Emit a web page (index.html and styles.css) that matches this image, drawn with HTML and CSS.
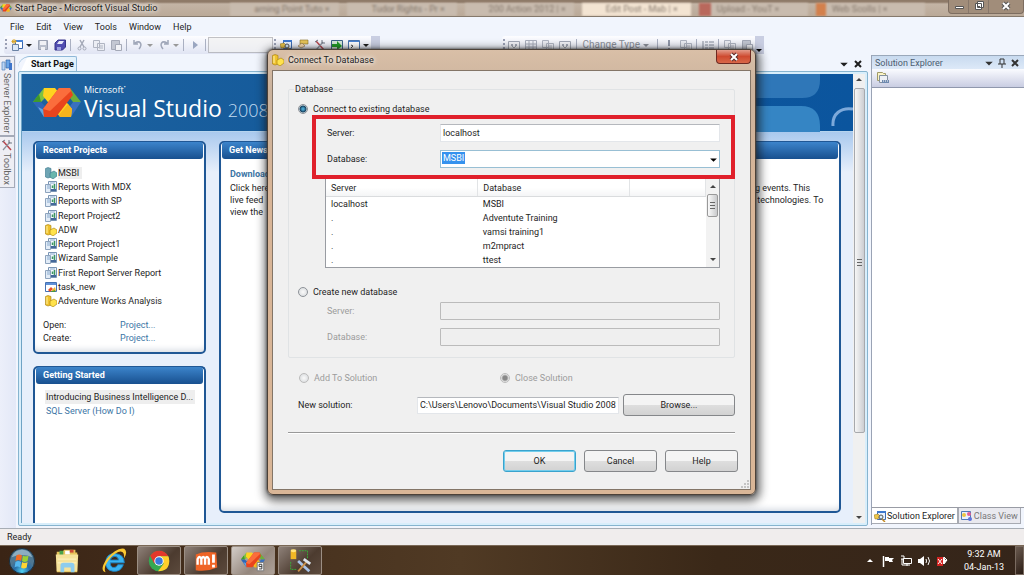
FILE: index.html
```html
<!DOCTYPE html>
<html lang="en">
<head>
<meta charset="utf-8">
<title>Start Page - Microsoft Visual Studio</title>
<link rel="stylesheet" href="styles.css">
</head>
<body>
<svg class="defs" aria-hidden="true">
  <symbol id="vs" viewBox="0 0 48 32">
    <path d="M11 1 0 15h8l8-8z" fill="#7fc241"/><path d="M0 15h8l-2-8z" fill="#3f9a2c"/>
    <path d="M0 15l11 15 4-8-7-7z" fill="#2f66b8"/><path d="M5 20l6 10 2-6z" fill="#63a7dd"/>
    <path d="M37 1l11 14h-8l-6-8z" fill="#6cae3c"/><path d="M48 15 38 30l-3-8 5-7z" fill="#3a70c0"/>
    <path d="M11 1h11l17 21-1 8H27L10 9z" fill="#ffd11f"/><path d="M27 30h11l1-8-4-5-9 11z" fill="#f6b41c"/>
    <path d="M26 1h11l3 7-17 22H11l-1-8z" fill="#e9441d"/><path d="M26 1h11l1 3-21 20-7-2z" fill="#fb6d3c"/>
  </symbol>
  <symbol id="cube" viewBox="0 0 12 12">
    <path d="M.5 1.500 3 .5l3 1V10l-3 1-2.500-1z" fill="#f0c22e" stroke="#a57c09" stroke-width=".6"/>
    <path d="M5 6l4-2 3 2v3l-4 3-3-2z" fill="#ffe24b" stroke="#a57c09" stroke-width=".6"/><path d="M2 2v7" stroke="#fff2a2"/>
  </symbol>
  <symbol id="cubeblue" viewBox="0 0 12 12">
    <path d="M.5 1.500 3 .5l3 1V10l-3 1-2.500-1z" fill="#6fa5b4" stroke="#38758b" stroke-width=".6"/>
    <path d="M5 6l4-2 3 2v3l-4 3-3-2z" fill="#69b6ad" stroke="#38758b" stroke-width=".6"/>
  </symbol>
  <symbol id="report" viewBox="0 0 12 12">
    <path d="M3.500.5h8v10h-8z" fill="#f2f7fd" stroke="#7a95b4"/><path d="M.5 3.500h5v8h-5z" fill="#e2ecf7" stroke="#8da3bd"/>
    <path d="M5 2h5M2 5h3M2 7h3" stroke="#89aacd"/><path d="M7.500 7V4.500M9.500 8V3" stroke="#3c9560" stroke-width="1.500"/><path d="M6 9h5" stroke="#44689a" stroke-width="2"/>
  </symbol>
  <symbol id="task" viewBox="0 0 12 12">
    <path d="M.5 1.500h11v9H.5z" fill="#fff" stroke="#4571b2"/><path d="M1 2h10v2H1z" fill="#5f91d8"/>
    <path d="M3 9l3-3 2 2-3 3z" fill="#e6502b"/><path d="M7 9l3-3 1 4H7z" fill="#f0b727"/><path d="M5 11h5V9z" fill="#49983c"/>
  </symbol>
  <symbol id="newproj" viewBox="0 0 12 12">
    <path d="M4.500 1.500h7v8h-7z" fill="#fff" stroke="#3866ad"/><path d="M4 1h8v2H4z" fill="#4783d6"/>
    <path d="M1.500 5.500h6v6h-6z" fill="#dce8f8" stroke="#6b83a5"/><path d="M3 0v5M.5 2.500h5M1 1l4 3M5 1 1 4" stroke="#d7a62d"/>
  </symbol>
  <symbol id="save" viewBox="0 0 12 12"><path d="M1.500 1.500h9v9h-9z" fill="#b9bfcc" stroke="#9ba2b3"/><path d="M3 2h6v4H3zM4 8h4v3H4z" fill="#f0f1f5"/></symbol>
  <symbol id="saveall" viewBox="0 0 12 12"><path d="M4 1h7.500v7l-3 3H1V4z" fill="#514db1" stroke="#37358b"/><path d="M5 2h5L8 5H3z" fill="#e4e7fa"/><path d="M3 8h4v3H3z" fill="#9ba1e1"/></symbol>
  <symbol id="cut" viewBox="0 0 12 12"><path d="M4 1l4 7M8 1 4 8" stroke="#a4a9b7" stroke-width="1.500"/><g fill="none" stroke="#a4a9b7"><circle cx="3.500" cy="9.500" r="1.500"/><circle cx="8.500" cy="9.500" r="1.500"/></g></symbol>
  <symbol id="copy" viewBox="0 0 12 12"><g fill="#eceef4" stroke="#b0b5c2"><path d="M.5 1.500h6v7h-6zM4.500 4.500h7v7h-7z"/></g><path d="M6 7h4M6 9h4" stroke="#b0b5c2"/></symbol>
  <symbol id="paste" viewBox="0 0 12 12"><path d="M1.500 1.500h8v9h-8z" fill="#c3c7d2" stroke="#a4a9b7"/><path d="M5.500 5.500h6v6h-6z" fill="#f1f2f6" stroke="#a4a9b7"/></symbol>
  <symbol id="undo" viewBox="0 0 12 12"><path d="M3 4c5-3 8 1 4 6M2 1v4h4" fill="none" stroke="#9fa6b8" stroke-width="1.500"/></symbol>
  <symbol id="redo" viewBox="0 0 12 12"><path d="M9 4c-5-3-8 1-4 6M10 1v4H6" fill="none" stroke="#9fa6b8" stroke-width="1.500"/></symbol>
  <symbol id="play" viewBox="0 0 12 12"><path d="M4 2l5 4-5 4z" fill="#9aa6c0"/></symbol>
  <symbol id="explorer" viewBox="0 0 12 12"><path d="M3.500 1.500h8v8h-8z" fill="#e9f2ff" stroke="#3d6cb3"/><path d="M3 1h9v2H3z" fill="#3d78ce"/><path d="M0 5l4-1 2 2-2 3H1z" fill="#edc649" stroke="#917116" stroke-width=".5"/><circle cx="7" cy="7" r="2" fill="#d7eeff" stroke="#555"/><path d="M8 9l3 3" stroke="#c48a24" stroke-width="1.500"/></symbol>
  <symbol id="props" viewBox="0 0 12 12"><path d="M3 1h8v4H3z" fill="#e8c65a" stroke="#876e25" stroke-width=".6"/><path d="M1 7l4-3 3 3-4 2z" fill="#fbdcaf" stroke="#8a7045" stroke-width=".6"/></symbol>
  <symbol id="tools" viewBox="0 0 12 12"><path d="M2 2l8 9" stroke="#b8444c" stroke-width="1.500"/><path d="M9 3 2 11" stroke="#8a929d" stroke-width="1.200"/><path d="M8 1v3h3M1 3l3-2" stroke="#707985" fill="none"/></symbol>
  <symbol id="green" viewBox="0 0 12 12"><path d="M.5 1.500h11v9H.5z" fill="#d5eadb" stroke="#3b6289"/><path d="M1 5h5V2l5 5-5 4V8H1z" fill="#1e9a25"/></symbol>
  <symbol id="window" viewBox="0 0 12 12"><path d="M.5 1.500h11v10H.5z" fill="#fff" stroke="#4975b0"/><path d="M1 2h10v1H1z" fill="#4b85d4"/><path d="M3 6l2 1-2 2" fill="none" stroke="#444"/></symbol>
  <symbol id="pane" viewBox="0 0 12 12"><path d="M.5 2.500h11v9H.5z" fill="#f2f3f8" stroke="#a3a8b6"/><path d="M3 5h2v2H3zM7 5h2v2H7z" fill="#a3a8b6"/><path d="M4 7l2 2 2-2" fill="none" stroke="#a3a8b6"/></symbol>
  <symbol id="grid" viewBox="0 0 12 12"><path d="M.5 1.500h11v9H.5zM.5 5h11M.5 8h11M4 1v10M8 1v10" fill="none" stroke="#a9aebc"/></symbol>
  <symbol id="lines" viewBox="0 0 12 12"><path d="M1 2v8M3 3h3M3 6h3M3 9h3M7 3h5M7 6h5M7 9h5" stroke="#858d9d"/></symbol>
  <symbol id="bang" viewBox="0 0 12 12"><path d="M6 1v6M6 9v2" stroke="#9198aa" stroke-width="2"/></symbol>
  <symbol id="servers" viewBox="0 0 12 12"><path d="M1 3h3v8H1z" fill="#bad5f5" stroke="#5484bc" stroke-width=".7"/><path d="M5 1h4v8H5z" fill="#6aa5e7" stroke="#3465a4" stroke-width=".7"/><path d="M8 4h3v7H8z" fill="#3e75ca"/></symbol>
  <symbol id="classview" viewBox="0 0 12 12"><path d="M.5 1.500h9v8h-9z" fill="#e9f0ff" stroke="#4f79b5"/><circle cx="3" cy="5" r="2" fill="#edc541"/><circle cx="8" cy="4" r="2" fill="#e15e94"/><circle cx="9" cy="9" r="2" fill="#5c72db"/></symbol>
  <symbol id="files" viewBox="0 0 14 14"><path d="M1.500 1.500h5l1 1h2v7h-8z" fill="#fbf4c6" stroke="#a09b68"/><path d="M3.500 4.500h8v7h-8z" fill="#edf0f5" stroke="#83919f"/><path d="M6 9h7v3H6z" fill="#6e89ae"/><path d="M7 10h1M9 10h1M11 10h1" stroke="#fff"/></symbol>
  <symbol id="x" viewBox="0 0 10 10"><path d="M2 2l6 6M8 2 2 8" stroke="currentColor" stroke-width="2"/></symbol>
  <symbol id="down" viewBox="0 0 8 8"><path d="M1 3h6L4 6z" fill="currentColor"/></symbol>
  <symbol id="up" viewBox="0 0 8 8"><path d="M1 5h6L4 2z" fill="currentColor"/></symbol>
</svg>

<div class="app">
  <header class="titlebar">
    <svg class="i12"><use href="#vs"/></svg>
    <span class="title">Start Page - Microsoft Visual Studio</span>
    <div class="glass" aria-hidden="true">
      <i>arning Point Tuto ×</i><i>Tudor Rights - Pr ×</i><i>200 Action 2012 | ×</i><i class="on">Edit Post - Mab | ×</i><i class="red">Upload - YouT ×</i><i class="orange">Web Scolls | ×</i>
    </div>
    <div class="winbtns">
      <button aria-label="Minimize"><svg class="i12" viewBox="0 0 12 12"><path d="M2.500 6.500h8v2h-8z" fill="#fff" stroke="#555"/></svg></button>
      <button aria-label="Restore"><svg class="i12" viewBox="0 0 12 12"><path d="M4.500 1.500h6v6h-6zM2.500 3.500h6v6h-6z" fill="#fff" stroke="#555"/><path d="M5 6h2v1H5z" fill="#555"/></svg></button>
      <button aria-label="Close"><svg class="i12" viewBox="0 0 12 12"><path d="M3 3l6 6M9 3 3 9" stroke="#555" stroke-width="4"/><path d="M3 3l6 6M9 3 3 9" stroke="#fff" stroke-width="2"/></svg></button>
    </div>
  </header>

  <nav class="menu"><button>File</button><button>Edit</button><button>View</button><button>Tools</button><button>Window</button><button>Help</button></nav>

  <div class="toolbars">
    <div class="toolbar">
      <b class="grip"></b>
      <button aria-label="New project"><svg><use href="#newproj"/></svg></button><svg class="arr"><use href="#down"/></svg>
      <button aria-label="Save"><svg><use href="#save"/></svg></button>
      <button aria-label="Save all"><svg><use href="#saveall"/></svg></button><b class="sep"></b>
      <button aria-label="Cut"><svg><use href="#cut"/></svg></button>
      <button aria-label="Copy"><svg><use href="#copy"/></svg></button>
      <button aria-label="Paste"><svg><use href="#paste"/></svg></button><b class="sep"></b>
      <button aria-label="Undo"><svg><use href="#undo"/></svg></button><svg class="arr dim"><use href="#down"/></svg>
      <button aria-label="Redo"><svg><use href="#redo"/></svg></button><svg class="arr dim"><use href="#down"/></svg><b class="sep"></b>
      <button aria-label="Start"><svg><use href="#play"/></svg></button><b class="sep"></b>
      <select class="config" aria-label="Solution configuration" disabled></select>
      <b class="grip"></b>
      <button aria-label="Solution Explorer"><svg><use href="#explorer"/></svg></button>
      <button aria-label="Properties"><svg><use href="#props"/></svg></button>
      <button aria-label="Toolbox"><svg><use href="#tools"/></svg></button>
      <button aria-label="Start Page"><svg><use href="#green"/></svg></button>
      <button aria-label="Command Window"><svg><use href="#window"/></svg></button><svg class="arr"><use href="#down"/></svg>
      <b class="end"><svg><use href="#down"/></svg></b>
    </div>
    <div class="toolbar faded">
      <b class="grip"></b>
      <button aria-label="Diagram pane"><svg><use href="#pane"/></svg></button>
      <button aria-label="Criteria pane"><svg><use href="#grid"/></svg></button>
      <button aria-label="SQL pane"><svg><use href="#copy"/></svg></button>
      <button aria-label="Results pane"><svg><use href="#pane"/></svg></button><b class="sep"></b>
      <button class="word">Change Type<svg class="arr"><use href="#down"/></svg></button><b class="sep"></b>
      <button aria-label="Execute SQL"><svg><use href="#bang"/></svg></button>
      <button aria-label="Verify SQL"><svg><use href="#copy"/></svg></button><b class="sep"></b>
      <button aria-label="Group by"><svg><use href="#lines"/></svg></button><b class="sep"></b>
      <button aria-label="Add table"><svg><use href="#copy"/></svg></button>
      <button aria-label="Add derived table"><svg><use href="#paste"/></svg></button>
      <b class="end"><svg><use href="#down"/></svg></b>
    </div>
  </div>

  <main class="work">
    <aside class="rail">
      <button><svg class="i12"><use href="#servers"/></svg><span>Server Explorer</span></button>
      <button><svg class="i12"><use href="#tools"/></svg><span>Toolbox</span></button>
    </aside>

    <section class="doc">
      <div class="tabs"><button class="tab">Start Page</button><span class="tabctl"><svg><use href="#down"/></svg><svg><use href="#x"/></svg></span></div>
      <div class="frame">
        <div class="page">
          <div class="banner">
            <svg class="logo"><use href="#vs"/></svg>
            <div class="brand"><span class="ms">Microsoft<sup>•</sup></span><span class="name">Visual Studio<small>2008</small></span></div>
            <svg class="deco" viewBox="0 0 112 58"><path d="M0 0h79v6q0 18-18 18H0z" fill="#2f77b8"/><path d="M0 32h60q19 0 19 20v6H0z" fill="#3585c4"/><path d="M112 35c-12-2-21 5-20 17" fill="none" stroke="#7da9da" stroke-width="3"/></svg>
          </div>
          <div class="cols">
            <div class="left">
              <section class="panel">
                <h2>Recent Projects</h2>
                <ul class="projects">
                  <li class="sel"><svg><use href="#cubeblue"/></svg><a href="#">MSBI</a></li>
                  <li><svg><use href="#report"/></svg><a href="#">Reports With MDX</a></li>
                  <li><svg><use href="#report"/></svg><a href="#">Reports with SP</a></li>
                  <li><svg><use href="#report"/></svg><a href="#">Report Project2</a></li>
                  <li><svg><use href="#cube"/></svg><a href="#">ADW</a></li>
                  <li><svg><use href="#report"/></svg><a href="#">Report Project1</a></li>
                  <li><svg><use href="#report"/></svg><a href="#">Wizard Sample</a></li>
                  <li><svg><use href="#report"/></svg><a href="#">First Report Server Report</a></li>
                  <li><svg><use href="#task"/></svg><a href="#">task_new</a></li>
                  <li><svg><use href="#cube"/></svg><a href="#">Adventure Works Analysis</a></li>
                </ul>
                <dl class="open"><dt>Open:</dt><dd><a href="#">Project...</a></dd><dt>Create:</dt><dd><a href="#">Project...</a></dd></dl>
              </section>
              <section class="panel cut">
                <h2>Getting Started</h2>
                <ul class="started"><li class="sel"><a href="#">Introducing Business Intelligence D...</a></li><li><a href="#">SQL Server (How Do I)</a></li></ul>
              </section>
            </div>
            <section class="panel news">
              <h2>Get News</h2>
              <div class="story">
                <a href="#">Download</a>
                <div class="lines"><p>Click here</p><p>ng events. This</p><p>live feed</p><p>d technologies. To</p><p>view the</p></div>
              </div>
            </section>
          </div>
        </div>
        <div class="vscroll" aria-hidden="true"><svg><use href="#up"/></svg><b></b><svg><use href="#down"/></svg></div>
      </div>
    </section>

    <aside class="solution">
      <h3><span>Solution Explorer</span><svg><use href="#down"/></svg><svg viewBox="0 0 10 10"><path d="M3 1v5M7 1v5M3 1h4M1 6h8M5 6v4" fill="none" stroke="#333"/></svg><svg><use href="#x"/></svg></h3>
      <div class="soltools"><button aria-label="Show all files"><svg><use href="#files"/></svg></button></div>
      <div class="tree"></div>
      <div class="soltabs"><button class="on"><svg><use href="#explorer"/></svg>Solution Explorer</button><button><svg><use href="#classview"/></svg>Class View</button></div>
    </aside>
  </main>

  <footer class="status">Ready</footer>

  <nav class="taskbar">
    <button aria-label="Start"><svg viewBox="0 0 30 30"><defs><radialGradient id="orb" cy=".9"><stop offset="0" stop-color="#4fd0f2"/><stop offset=".6" stop-color="#276ba5"/><stop offset="1" stop-color="#4f7792"/></radialGradient></defs><circle cx="15" cy="15" r="13.500" fill="url(#orb)" stroke="#172d3e"/><path d="M4 11q3-8 11-8t11 8q-11-5-22 0z" fill="#b7d2df" opacity=".6"/><path d="M9 9q3-2 6 0l-1 6q-3-2-6 0z" fill="#f16b25"/><path d="M16 9q3 2 6 0l-1 6q-3 2-6 0z" fill="#9bd032"/><path d="M8 16q3-2 6 0l-1 6q-3-2-6 0z" fill="#55b7ee"/><path d="M15 16q3 2 6 0l-1 6q-3 2-6 0z" fill="#ffd432"/></svg></button>
    <button aria-label="Windows Explorer"><svg viewBox="0 0 30 30"><path d="M4 5h6l2-2h12v3h2v21H4z" fill="#e7c45c"/><path d="M7 4h4v5H7z" fill="#4aa34a"/><path d="M13 4h5v4h-5z" fill="#fff"/><path d="M18 3h4v3h-4z" fill="#cc4a36"/><path d="M3 8h24l-1 18H4z" fill="#f6e29a"/><path d="M5 13h20M5 17h20" stroke="#fff4c4"/><path d="M8 27v-7q0-3 3-3h9q3 0 3 3v7h-4v-5h-7v5z" fill="#8dccee"/></svg></button>
    <button aria-label="Internet Explorer"><svg viewBox="0 0 30 30"><path d="M25 19q-3 8-11 7-8-1-8-10 1-9 10-9 10 1 10 10H11q0 5 4 5 3 0 4-3zM11 14h9q-1-4-4-4-4 0-5 4z" fill="#39b4f0" stroke="#1c86ca"/><path d="M6 27Q-1 25 7 13 18 0 26 2q4 3 0 10-0-7-3-7-5-1-13 8-7 9-4 14z" fill="#fbc832"/></svg></button>
    <button class="run" aria-label="Chrome"><svg viewBox="0 0 30 30"><circle cx="15" cy="15" r="11" fill="#35a852"/><path d="M5.500 9.500Q9 4 15 4q7 0 10 6H15l-5 8z" fill="#e2382c"/><path d="M25 10H15l5 8-6 8q12 0 12-11 0-3-1-5z" fill="#ffcf2b"/><circle cx="15" cy="15" r="5" fill="#fff"/><circle cx="15" cy="15" r="4" fill="#3a78dc"/></svg></button>
    <button class="run" aria-label="Micromax"><svg viewBox="0 0 30 30"><path d="M4 8q9-4 22-2l1 16q-11 5-23 3z" fill="#ef6426"/><path d="M6 19v-6q2-5 4 0v6M10 13q2-5 4 0v6M14 13q2-5 4 0v6" fill="none" stroke="#fff" stroke-width="2.500"/><path d="M23 8v9M23 19v3" stroke="#fff" stroke-width="3"/></svg></button>
    <button class="run active" aria-label="Visual Studio"><svg viewBox="0 0 30 30"><use href="#vs" x="2" y="5" width="26" height="18"/><path d="M19.500 16.500h7v9h-7z" fill="#fff" stroke="#777"/><path d="M21.500 18.500h3v5h-3M21.500 18.500v2.500h3" fill="none" stroke="#333"/></svg></button>
    <button class="run" aria-label="Database tools"><svg viewBox="0 0 30 30"><path d="M5 4h6v9H5z" fill="#f0b825"/><ellipse cx="8" cy="4" rx="3" ry="1.500" fill="#ffe47b"/><path d="M14 4h9v8M5 16v8h7" fill="none" stroke="#37b237" stroke-dasharray="2 1"/><path d="M13 15l12 11" stroke="#a8c4e8" stroke-width="3"/><path d="M22 16 13 26" stroke="#c9904a" stroke-width="2"/><path d="M19 13l7 5" stroke="#dbe3ec" stroke-width="3"/></svg></button>
    <div class="tray">
      <svg class="small"><use href="#up"/></svg>
      <svg viewBox="0 0 12 12"><path d="M1.500 1v11" stroke="#fff" stroke-width="1.500"/><path d="M3 2h4v1h5l-2 2 1 2H7V6H3z" fill="#fff"/></svg>
      <svg viewBox="0 0 12 12"><path d="M3.500 3.500h8v5h-8zM1 1h3v3H1M2 4v6h8M7 9v2" fill="none" stroke="#fff"/></svg>
      <svg viewBox="0 0 12 12"><path d="M0 4h2l4-3v10L2 8H0z" fill="#fff"/><path d="M8 4q1 2 0 4M10 2q3 4 0 8" fill="none" stroke="#fff"/></svg>
      <svg viewBox="0 0 12 12"><path d="M7 3l3 3 1-1M8 2l3 3-3 4-2-2z" fill="#fff" stroke="#fff"/><path d="M1 2h6v9H1z" fill="#d32421"/><path d="M2 4l4 5M6 4 2 9" stroke="#fff"/></svg>
      <time>9:32 AM<br>04-Jan-13</time>
    </div>
    <button class="peek" aria-label="Show desktop"></button>
  </nav>
</div>

<div class="dialog" role="dialog" aria-labelledby="dlg-title">
  <header class="dlgbar">
    <svg class="i12"><use href="#cube"/></svg><span id="dlg-title">Connect To Database</span>
    <button class="close" aria-label="Close dialog"><svg viewBox="0 0 12 12"><path d="M3 3l6 6M9 3 3 9" stroke="#5b2a27" stroke-width="4"/><path d="M3 3l6 6M9 3 3 9" stroke="#fff" stroke-width="2"/></svg></button>
  </header>
  <form class="client">
    <fieldset class="group">
      <legend>Database</legend>
      <label class="radio"><input type="radio" name="mode" checked>Connect to existing database</label>
      <div class="highlight">
        <div class="field"><label for="srv">Server:</label><input type="text" id="srv" value="localhost"></div>
        <div class="field"><label for="db">Database:</label><span class="combo"><input type="text" id="db" value=""><mark>MSBI</mark><svg><use href="#down"/></svg></span></div>
      </div>
      <div class="list">
        <table>
          <thead><tr><th>Server</th><th>Database</th><th></th></tr></thead>
          <tbody>
            <tr><td>localhost</td><td>MSBI</td><td></td></tr>
            <tr><td>.</td><td>Adventute Training</td><td></td></tr>
            <tr><td>.</td><td>vamsi training1</td><td></td></tr>
            <tr><td>.</td><td>m2mpract</td><td></td></tr>
            <tr><td>.</td><td>ttest</td><td></td></tr>
          </tbody>
        </table>
        <div class="lscroll" aria-hidden="true"><svg><use href="#up"/></svg><b></b><svg><use href="#down"/></svg></div>
      </div>
      <label class="radio create"><input type="radio" name="mode">Create new database</label>
      <div class="newdb">
        <div class="field off"><label for="nsrv">Server:</label><input type="text" id="nsrv" disabled></div>
        <div class="field off"><label for="ndb">Database:</label><input type="text" id="ndb" disabled></div>
      </div>
    </fieldset>
    <div class="choice"><label class="radio off"><input type="radio" name="sol" disabled>Add To Solution</label><label class="radio off"><input type="radio" name="sol" checked disabled>Close Solution</label></div>
    <div class="newsol"><label for="path">New solution:</label><input type="text" id="path" value="C:\Users\Lenovo\Documents\Visual Studio 2008\Projects"><button type="button" class="btn">Browse...</button></div>
    <hr>
    <div class="actions"><button type="button" class="btn ok">OK</button><button type="button" class="btn">Cancel</button><button type="button" class="btn">Help</button></div>
    <svg class="gripper" viewBox="0 0 8 8"><path d="M6 0h2v2H6zM3 3h2v2H3zM6 3h2v2H6zM0 6h2v2H0zM3 6h2v2H3zM6 6h2v2H6z" fill="#c4c4c4"/></svg>
  </form>
</div>
</body>
</html>
```
FILE: styles.css
```css
* { box-sizing: border-box; }
body { margin: 0; height: 100vh; overflow: hidden; position: relative; font: 9px/12px Roboto, "Noto Sans", sans-serif; color: #1e1e1e; }
button, input, select { font: inherit; color: inherit; }
button { border: 0; padding: 0; background: none; }
h2, h3, ul, dl, dd, p { margin: 0; padding: 0; }
ul { list-style: none; }
a { color: #3c75a5; text-decoration: none; }
svg { flex: none; width: 12px; height: 12px; }
.defs { position: absolute; width: 0; height: 0; }
.app { height: 100%; display: flex; flex-direction: column; background: #f1f5fd; }

.titlebar { height: 17px; display: flex; align-items: center; gap: 3px; flex: none; overflow: hidden; border-bottom: 1px solid #85796c; background: linear-gradient(#8e7a68 0, #8e7a68 2px, #c3b4a5 4px, #baa998); }
.title { white-space: nowrap; text-shadow: 0 0 4px #fff, 0 0 6px #fff; }
.glass { flex: 1; height: 100%; display: flex; overflow: hidden; padding: 3px 20px 0 70px; gap: 8px; filter: blur(1px); color: #85786c; white-space: nowrap; }
.glass i { flex: 1 1 100px; font-style: normal; padding-left: 24px; background: #c8bbae; overflow: hidden; }
.glass .on { background: #f3e4d2; }
.glass .red { border-left: 12px solid #b9685c; padding-left: 6px; }
.glass .orange { border-left: 10px solid #d3804c; padding-left: 6px; }
.winbtns { display: flex; height: 14px; align-self: flex-start; background: #a18d7a; border: 1px solid #7d6d60; border-top: 0; border-radius: 0 0 4px 4px; }
.winbtns button { width: 20px; border-right: 1px solid #87776a; }
.winbtns button:last-child { width: 34px; border: 0; }

.menu { flex: none; height: 19px; display: flex; align-items: center; gap: 12px; padding-left: 10px; }
.toolbars { flex: none; height: 19px; display: flex; justify-content: space-between; padding: 0 260px 0 4px; }
.toolbar { display: flex; align-items: center; height: 18px; background: linear-gradient(#fdfdff, #e0e4f3); border-radius: 3px; }
.toolbar button { width: 17px; height: 16px; display: grid; place-items: center; }
.toolbar .arr { width: 8px; height: 8px; margin-right: 1px; }
.toolbar .dim { color: #999; }
.toolbar .word { width: auto; display: flex; align-items: center; gap: 2px; padding: 0 4px; font-size: 10px; }
.faded { color: #8a8e98; }
.sep { width: 1px; height: 12px; margin: 0 2px; background: #aab0c2; }
.grip { width: 2px; height: 12px; margin: 0 1px; background: repeating-linear-gradient(#9aa0b5 0 2px, transparent 2px 4px); }
.config { appearance: none; width: 65px; height: 16px; border: 1px solid #a9a9ad; background: #f2f2f2; }
.end { align-self: stretch; width: 9px; background: #c9cee2; display: flex; align-items: flex-end; color: #000; }
.end svg { width: 8px; height: 8px; }

.work { flex: 1; min-height: 0; display: flex; gap: 2px; }
.rail { width: 16px; padding-top: 1px; background: linear-gradient(90deg, #eceffa, #e3e8f7); }
.rail button { width: 15px; display: flex; flex-direction: column; align-items: center; gap: 2px; padding: 2px 0; border: 1px solid #a5aab8; border-left: 0; background: #eeeef4; color: #666; }
.rail span { writing-mode: vertical-rl; line-height: 12px; }
.doc { flex: 1; min-width: 0; display: flex; flex-direction: column; margin-bottom: 2px; }
.tabs { height: 16px; flex: none; display: flex; justify-content: space-between; align-items: flex-end; }
.tab { height: 15px; padding: 0 2px 0 13px; font-weight: bold; border: 1px solid #8fb8d8; border-bottom: 0; border-left: 0; border-radius: 12px 2px 0 0; background: linear-gradient(115deg, transparent 8px, #fff 9px, #dff0fb); color: #111; }
.tabctl { display: flex; gap: 4px; padding: 0 5px 2px 0; }
.tabctl svg { width: 10px; height: 10px; }
.frame { flex: 1; min-height: 0; display: flex; padding: 2px; border: 1px solid #86b4cf; background: #d8eefb; border-radius: 2px; }
.page { flex: 1; min-width: 0; overflow: hidden; display: flex; flex-direction: column; background: #e7effb; border-left: 1px solid #6fa3c5; }
.banner { flex: none; height: 58px; display: flex; align-items: center; gap: 3px; padding-left: 11px; color: #fff; background: linear-gradient(90deg, #1d629f, #12589a 45%, #0b559e); border-bottom: 1px solid #b6d4ee; }
.logo { width: 48px; height: 32px; }
.brand { display: flex; flex-direction: column; white-space: nowrap; padding-top: 2px; font-family: "Open Sans", "Noto Sans", sans-serif; }
.ms { font-size: 9px; line-height: 10px; }
.ms sup { font-size: 5px; line-height: 1px; }
.name { font-size: 23px; line-height: 26px; }
.name small { font-size: 18px; margin-left: 6px; color: #c3dcf2; font-weight: 300; }
.deco { width: 112px; height: 58px; margin-left: auto; }
.cols { flex: 1; min-height: 0; display: flex; gap: 13px; padding: 9px 12px 10px 11px; background: linear-gradient(#a9c9ee, #e7effb 40px); }
.left { width: 173px; flex: none; display: flex; flex-direction: column; gap: 12px; margin-bottom: -10px; }
.panel { border: 2px solid #1f5795; border-radius: 5px; background: #fff; padding: 0 1px; box-shadow: inset 0 -6px 6px -4px #d5dae2; }
.panel h2 { margin-top: -1px; height: 17px; padding-left: 7px; font-size: 9px; line-height: 17px; color: #fff; background: linear-gradient(#3c84cb, #18508f); border-radius: 3px; white-space: nowrap; overflow: hidden; }
.cut { flex: 1; border-bottom: 0; border-radius: 5px 5px 0 0; box-shadow: none; }
.news { flex: 1; min-width: 0; }
.projects { padding: 7px 0 0 9px; }
.projects li { display: flex; align-items: center; gap: 1px; height: 14px; white-space: nowrap; }
.projects li:nth-child(4n) { height: 15px; }
.projects a, .sel a { color: #1e1e1e; }
.projects .sel a { background: #eee; padding-right: 3px; }
.open { display: grid; grid-template-columns: 77px 1fr; padding: 11px 0 7px 7px; line-height: 13px; }
.started { padding: 6px 0 0 9px; white-space: nowrap; }
.started li { line-height: 14px; padding-left: 1px; }
.started .sel { background: #eee; margin-right: 8px; }
.story { padding: 9px 8px 0; line-height: 12px; }
.story > a { font-weight: bold; }
.lines { display: grid; grid-template-columns: 1fr 80px; padding-top: 2px; white-space: nowrap; }
.vscroll { width: 12px; flex: none; display: flex; flex-direction: column; align-items: center; justify-content: space-between; background: #f0f0f0; padding: 2px 0; }
.vscroll svg, .lscroll svg { width: 8px; height: 8px; color: #444; }
.vscroll b { width: 11px; flex: 1; margin: 4px 0 80px; border: 1px solid #a7a9ad; border-radius: 2px; background: linear-gradient(#666, #666) center 170px / 5px 1px no-repeat, linear-gradient(#666, #666) center 173px / 5px 1px no-repeat, linear-gradient(#666, #666) center 176px / 5px 1px no-repeat, linear-gradient(90deg, #f6f6f6, #ccced2); }

.solution { width: 153px; flex: none; margin: 0 0 3px 1px; display: flex; flex-direction: column; border-left: 1px solid #9aa3b5; }
.solution h3 { height: 14px; display: flex; align-items: center; gap: 3px; padding: 0 4px 0 3px; font-weight: normal; font-size: 9px; color: #4b5c70; border-top: 1px solid #9aa8ba; background: linear-gradient(#c8daef, #dde9f8); }
.solution h3 span { flex: 1; }
.solution h3 svg { width: 10px; height: 10px; color: #333; }
.soltools { height: 19px; padding: 2px 4px; border-bottom: 1px solid #9098ad; background: linear-gradient(#fafbff, #c9cde2); }
.soltools svg { width: 14px; height: 14px; }
.tree { flex: 1; background: #fff; border-bottom: 1px solid #999ca5; }
.soltabs { height: 17px; display: flex; color: #777; }
.soltabs button { display: flex; align-items: center; height: 16px; gap: 1px; padding: 0 2px; border: 1px solid #a7aab2; border-top: 0; background: #e9e9ef; white-space: nowrap; }
.soltabs .on { background: #fff; color: #1e1e1e; border-left: 0; }

.status { flex: none; height: 17px; padding-left: 7px; line-height: 17px; background: #f0eded; border-top: 1px solid #a7adb5; }
.taskbar { flex: none; height: 30px; display: flex; align-items: center; border-top: 1px solid #7a6856; background: linear-gradient(90deg, #3a2415, #503a24 45%, #3a2818 70%, #35251a); }
.taskbar button { width: 47px; height: 29px; display: grid; place-items: center; }
.taskbar button svg { width: 28px; height: 28px; }
.taskbar button:first-child { width: 43px; }
.taskbar .run { width: 44px; margin-right: 3px; border: 1px solid #9c8f84; border-radius: 2px; background: linear-gradient(135deg, #8d8078, #4c3b2f 60%, #5c4a3d); }
.taskbar .active { background: linear-gradient(135deg, #d3cdc8, #95877d 60%, #aea299); }
.tray { margin-left: auto; display: flex; align-items: center; gap: 6px; color: #fff; }
.tray .small { width: 8px; height: 8px; margin-right: 2px; }
.tray time { margin: 0 11px 0 10px; text-align: center; line-height: 13px; }
.taskbar .peek { width: 9px; border: 1px solid #7a6b60; background: linear-gradient(135deg, #6a5a4f, #2a1c14); }

/* Modal window floating above the workspace */
.dialog { position: absolute; left: 267px; top: 49px; width: 489px; padding: 0 4px 4px; border: 1px solid #4c4138; border-radius: 6px; background: linear-gradient(#d9bfa7 0, #cbb39d 40px, #d8b597 140px, #d9b697); box-shadow: 0 0 3px #333, 1px 3px 10px 3px rgba(20, 20, 20, .65); }
.dlgbar { height: 20px; display: flex; align-items: center; gap: 4px; text-shadow: 0 0 4px #fff, 0 0 6px #fff; }
.close { width: 35px; height: 14px; margin: 0 0 0 auto; align-self: flex-start; display: grid; place-items: center; border: 1px solid #6d2a22; border-top: 0; border-radius: 0 0 4px 4px; background: linear-gradient(#e39c8b, #ce4a30 50%, #d96849); }
.client { position: relative; padding: 12px 15px 17px; border: 1px solid #837567; background: #f0f0f0; }
.group { min-width: 0; margin: 0; padding: 8px 0 11px 9px; border: 1px solid #e0e3e5; border-radius: 2px; }
.group legend { margin-left: -4px; padding: 0 1px; }
.radio { display: flex; align-items: center; gap: 5px; height: 12px; }
.radio input, .radio input:disabled { appearance: none; flex: none; width: 10px; height: 10px; margin: 0; border: 1px solid #8d9298; border-radius: 50%; background: radial-gradient(#fafafa, #d4d7da); }
.radio input:checked { background: radial-gradient(#49a3cc 0 1px, #16415f 3px, #dfe6ea 4px); }
.radio input:disabled { border-color: #bbb; }
.radio input:checked:disabled { background: radial-gradient(#888 0 2px, #f0f0f0 4px); }
.off { color: #9c9c9c; }
.highlight { margin: 0 -1px 0 14px; padding: 5px 11px 7px; border: 4px solid #e0202b; display: grid; gap: 8px; }
.field { display: grid; grid-template-columns: 113px 1fr; align-items: center; }
.field input { width: 100%; height: 18px; padding: 0 2px; border: 1px solid #e3e6ea; border-top-color: #b5b8bd; background: #fff; }
.field input:disabled { border-color: #bbb; border-radius: 1px; background: #efefef; }
.combo { position: relative; display: block; height: 18px; }
.combo input { border-color: #98bfd4; }
.combo mark { position: absolute; left: 2px; top: 2px; height: 12px; line-height: 13px; padding: 0 1px; background: #3592ee; color: #fff; }
.combo svg { position: absolute; right: 2px; top: 5px; width: 9px; height: 9px; color: #000; }
.list { margin: 0 14px 0 27px; height: 89px; display: flex; overflow: hidden; border: 1px solid #999ca2; border-top: 0; background: #fff; }
.list table { flex: 1; table-layout: fixed; border-collapse: collapse; align-self: flex-start; }
.list th { height: 17px; padding: 2px 0 0 5px; text-align: left; font-weight: normal; border-bottom: 1px solid #dadcde; border-right: 1px solid #e2e4e6; background: linear-gradient(#fff 50%, #f4f5f6); }
.list th:first-child, .list th:nth-child(2) { width: 40%; }
.list td { height: 14px; padding: 0 0 0 5px; line-height: 14px; }
.list tbody tr:first-child td { height: 15px; }
.lscroll { width: 13px; display: flex; flex-direction: column; align-items: center; padding: 4px 0; background: #f2f2f2; }
.lscroll b { width: 11px; height: 23px; margin: 3px 0 auto; border: 1px solid #999; border-radius: 2px; background: linear-gradient(#666, #666) center 7px / 5px 1px no-repeat, linear-gradient(#666, #666) center 10px / 5px 1px no-repeat, linear-gradient(#666, #666) center 13px / 5px 1px no-repeat, linear-gradient(90deg, #fafafa, #c9cacc); }
.create { margin-top: 18px; }
.newdb { display: grid; gap: 8px; margin: 4px 14px 0 29px; }
.choice { display: grid; grid-template-columns: 201px 1fr; margin-top: 14px; padding-left: 11px; }
.newsol { display: grid; grid-template-columns: 115px 202px 112px; justify-content: space-between; align-items: center; margin-top: 10px; padding-left: 10px; }
.newsol input { min-width: 0; height: 17px; padding: 0 2px; border: 1px solid #e3e6ea; border-top-color: #b5b8bd; background: #fff; }
.btn { height: 22px; border: 1px solid #85878a; border-radius: 3px; background: linear-gradient(#f4f4f4 50%, #dedede 51%, #d2d2d2); }
.ok { border-color: #3aa3cd; box-shadow: inset 0 0 0 1px #73cdec; }
hr { margin: 16px 0; border: 0; height: 2px; border-top: 1px solid #999; background: #fff; }
.actions { display: grid; grid-template-columns: repeat(3, 73px); gap: 8px; justify-content: end; margin-right: -3px; }
.gripper { position: absolute; right: 1px; bottom: 1px; width: 8px; height: 8px; }
```
